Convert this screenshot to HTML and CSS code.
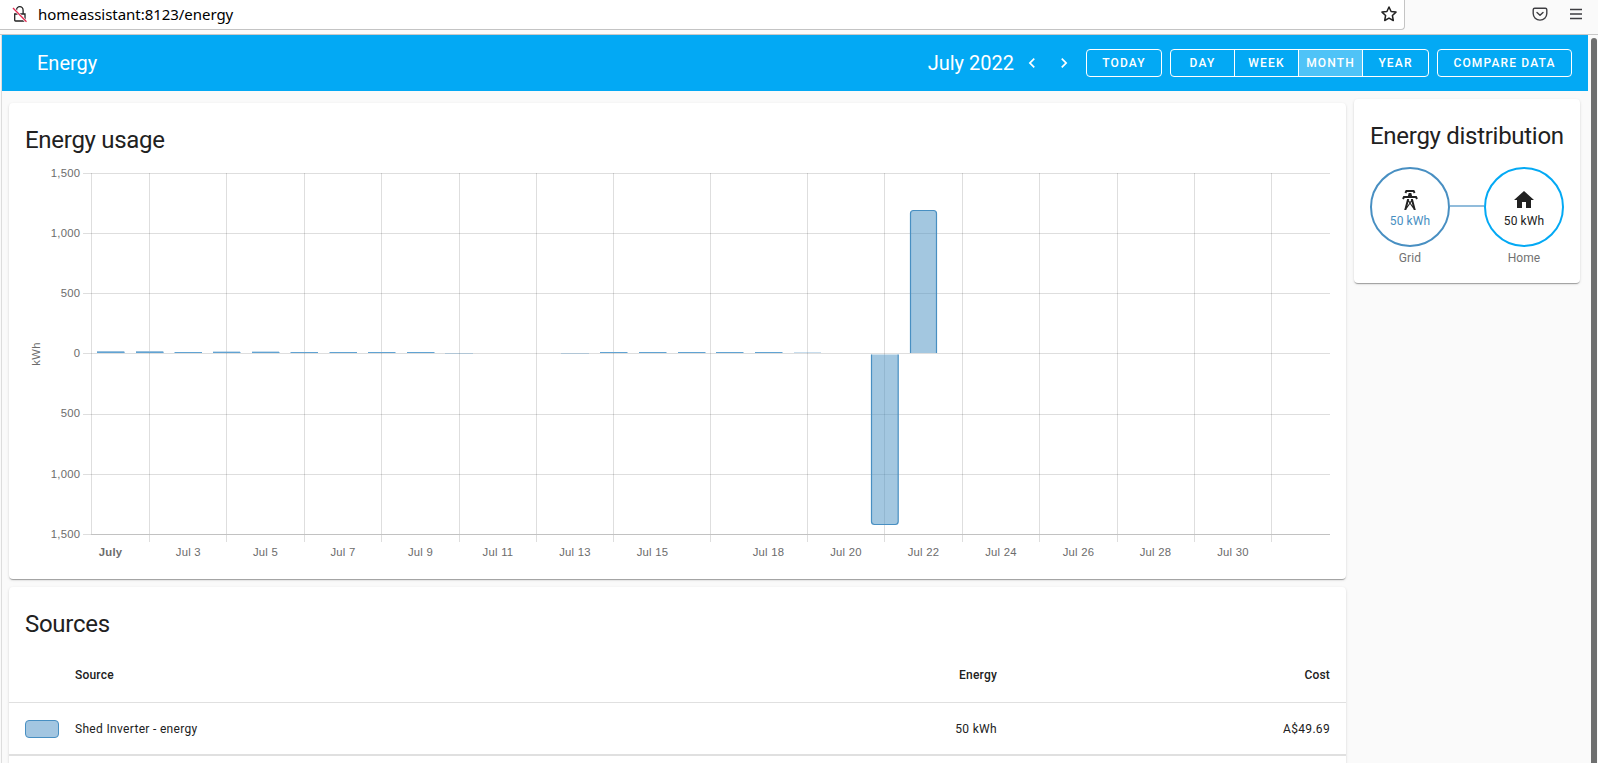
FILE: index.html
```html
<!DOCTYPE html>
<html lang="en">
<head>
<meta charset="utf-8">
<title>Energy</title>
<link rel="stylesheet" href="styles.css">
</head>
<body>
<div class="browser">
  <div class="urlbar">
    <svg class="lock" width="16" height="18" viewBox="0 0 16 18" fill="none"><path d="M2.700 9h10.300v6.200q0 .8-.8.8h-8.700q-.8 0-.8-.8zM4.500 8.500V5.300a3.300 3.600 0 0 1 6.600 0V8.500" stroke="#222" stroke-width="1.300"/><path d="M1 3l13.500 13.800" stroke="#fff" stroke-width="2.600"/><path d="M1 3l13.500 13.800" stroke="#e22850" stroke-width="1.300"/></svg>
    <span class="url">homeassistant:8123/energy</span>
    <svg class="star" width="16" height="16" viewBox="0 0 16 16" fill="none" stroke="#222" stroke-width="1.5" stroke-linejoin="round"><path d="M8 1l2.1 4.5 4.900.6-3.600 3.400.9 5L8 12.100 3.700 14.500l.9-5L1 6.100l4.900-.6z"/></svg>
  </div>
  <div class="tools">
    <svg width="16" height="16" viewBox="0 0 16 16" fill="none" stroke="#3e3e42" stroke-width="1.4" stroke-linecap="round" stroke-linejoin="round"><path d="M2.700 2.200h10.600q1.500 0 1.500 1.500V7.500a6.800 6.600 0 0 1-13.600 0V3.700q0-1.500 1.500-1.500zM5 6.400l3 2.900 3-2.900"/></svg>
    <svg width="12" height="12" viewBox="0 0 12 12" fill="none" stroke="#3e3e42" stroke-width="1.300"><path d="M0 1.500h12M0 6h12M0 10.500h12"/></svg>
  </div>
</div>
<div class="page">
  <div class="app">
    <header class="toolbar">
      <h1>Energy</h1>
      <span class="period">July 2022</span>
      <svg class="chev" width="20" height="20" viewBox="0 0 24 24"><path d="M15.410 16.580L10.830 12l4.580-4.590L14 6l-6 6 6 6z"/></svg>
      <svg class="chev next" width="20" height="20" viewBox="0 0 24 24"><path d="M8.590 16.580L13.170 12 8.590 7.410 10 6l6 6-6 6z"/></svg>
      <button class="btn today">Today</button>
      <div class="group">
        <button>Day</button><button>Week</button><button class="active">Month</button><button>Year</button>
      </div>
      <button class="btn compare">Compare data</button>
    </header>
    <main class="columns">
      <div class="main-col">
        <section class="card usage">
          <h2>Energy usage</h2>
          <svg class="chart" width="1337" height="420" viewBox="9 159 1337 420">
            <g class="grid">
              <path d="M83 173.500H1330M83 233.500H1330M83 293.500H1330M83 353.500H1330M83 414.500H1330M83 474.500H1330M83 534.500H91"/>
              <path d="M91.500 173V534M149.500 173V542M226.500 173V542M304.500 173V542M381.500 173V542M459.500 173V542M536.500 173V542M613.500 173V542M710.500 173V542M807.500 173V542M884.500 173V542M962.500 173V542M1039.500 173V542M1117.500 173V542M1194.500 173V542M1271.500 173V542"/>
              <path class="axis" d="M91 534.500H1330"/>
            </g>
            <g class="low">
              <path class="fill" d="M97 351.200h27.500v1.800h-27.500zM136 351.200h27.500v1.800h-27.500z"/>
              <path class="thin" d="M97 352.500h27.500M136 352.500h27.500M174.500 352.500h27.500M213 352.500h27.500M252 352.500h27.500M290.500 352.500h27.500M329.500 352.500h27.500M368 352.500h27.500M407 352.500h27.500M600 352.500h27.500M639 352.500h27.500M678 352.500h27.500M716 352.500h27.500M755 352.500h27.500"/>
              <path class="faint" d="M97 351.500h27M136 351.500h27M213 351.500h27M252 351.500h27M794 352.500h27M445 353.500h28M561 353.500h28"/>
            </g>
            <g class="bars">
              <path d="M910.500 353V213.500q0-3 3-3h20q3 0 3 3V353"/>
              <path d="M871.500 354.500V521.500q0 3 3 3h20.700q3 0 3-3V354.500"/>
            </g>
            <g class="ylab">
              <text x="80.300" y="177">1,500</text><text x="80.300" y="237">1,000</text><text x="80.300" y="297">500</text><text x="80.300" y="357">0</text><text x="80.300" y="417">500</text><text x="80.300" y="478">1,000</text><text x="80.300" y="538">1,500</text>
            </g>
            <text class="unit" transform="translate(40 354) rotate(-90)">kWh</text>
            <g class="xlab">
              <text class="first" x="110.600" y="556">July</text><text x="188.300" y="556">Jul 3</text><text x="265.500" y="556">Jul 5</text><text x="343" y="556">Jul 7</text><text x="420.500" y="556">Jul 9</text><text x="498" y="556">Jul 11</text><text x="575" y="556">Jul 13</text><text x="652.500" y="556">Jul 15</text><text x="768.500" y="556">Jul 18</text><text x="846" y="556">Jul 20</text><text x="923.500" y="556">Jul 22</text><text x="1001" y="556">Jul 24</text><text x="1078.500" y="556">Jul 26</text><text x="1155.500" y="556">Jul 28</text><text x="1233" y="556">Jul 30</text>
            </g>
          </svg>
        </section>
        <section class="card sources">
          <h2>Sources</h2>
          <div class="row head"><span></span><span>Source</span><span>Energy</span><span>Cost</span></div>
          <div class="row item"><i class="swatch"></i><span>Shed Inverter - energy</span><span>50 kWh</span><span>A$49.69</span></div>
          <div class="row total"></div>
        </section>
      </div>
      <section class="card dist">
        <h2>Energy distribution</h2>
        <div class="flow">
          <div class="node">
            <div class="circle grid-node">
              <svg width="24" height="24" viewBox="0 0 24 24"><path d="M8.280 5.450L6.500 4.550 7.760 2h8.470l1.270 2.550-1.780.89L15 4H9l-.72 1.450M18.620 8h-4.530l-.79-3h-2.600l-.79 3H5.380L4.100 10.550l1.790.89.730-1.440h10.760l.72 1.450 1.790-.89L18.620 8M17.770 22H15.700l-.24-.9L12 15.900l-3.470 5.200-.23.900H6.230l2.890-11h2.070l-.36 1.350L12 14.100l1.160-1.750-.35-1.350h2.070l2.890 11M11.400 15l-.9-1.350-1.180 4.480L11.400 15m3.280 3.120L13.500 13.640 12.600 15l2.080 3.120z"/></svg>
              <span>50 kWh</span>
            </div>
            <label>Grid</label>
          </div>
          <div class="link"></div>
          <div class="node">
            <div class="circle home-node">
              <svg width="24" height="24" viewBox="0 0 24 24"><path d="M10 20v-6h4v6h5v-8h3L12 3 2 12h3v8z"/></svg>
              <span>50 kWh</span>
            </div>
            <label>Home</label>
          </div>
        </div>
      </section>
    </main>
  </div>
  <div class="scrollbar"><div class="thumb"></div></div>
</div>
</body>
</html>
```
FILE: styles.css
```css
* { box-sizing: border-box; }
body {
  margin: 0;
  height: 763px;
  overflow: hidden;
  display: flex;
  flex-direction: column;
  background: #fafafa;
  color: #212121;
  font-family: Roboto, sans-serif;
}
h1, h2 { margin: 0; font-weight: 400; }
svg { display: block; flex: none; }
.browser {
  flex: none;
  display: flex;
  justify-content: space-between;
  height: 35px;
  border-bottom: 1px solid #c8c8c8;
}
.urlbar {
  display: flex;
  align-items: center;
  width: 1405px;
  height: 30px;
  padding: 0 7px 1px 12px;
  background: #fff;
  border: solid #c4c4c4;
  border-width: 0 1px 1px 0;
  border-radius: 0 0 4px 0;
}
.url {
  flex: 1;
  padding-left: 10px;
  font: 15px/20px "Noto Sans", sans-serif;
  letter-spacing: -.04px;
  color: #000;
}
.tools {
  display: flex;
  align-items: center;
  gap: 22px;
  height: 28px;
  padding-right: 16px;
}
.page { display: flex; flex: 1; min-height: 0; padding-left: 1px; }
.app { width: 1587px; border-left: 1px solid #ddd; overflow: hidden; }
.scrollbar { flex: 1; padding: 3px 1px 0 3px; background: #fafafa; }
.thumb { width: 6px; height: 740px; border-radius: 3px; background: #6e6f6f; }
.toolbar {
  display: flex;
  align-items: center;
  height: 56px;
  padding: 0 16px 0 35px;
  background: #03a9f4;
  color: #fff;
  font-size: 20px;
}
.toolbar h1 { flex: 1; font-size: 20px; }
.chev { margin-left: 8px; fill: #fff; }
.chev.next { margin-left: 12px; }
button {
  padding: 0;
  background: none;
  border: 0;
  color: #fff;
  font: 500 12px/27px Roboto, sans-serif;
  letter-spacing: 1.15px;
  text-transform: uppercase;
}
.btn { height: 28px; border: 1px solid #fff; border-radius: 4px; }
.today { width: 76px; margin-left: 12px; }
.compare { width: 135px; }
.group {
  display: flex;
  width: 259px;
  height: 28px;
  margin: 0 8px;
  border: 1px solid #fff;
  border-radius: 4px;
}
.group button { width: 64px; }
.group button + button { border-left: 1px solid #fff; }
.group button:first-child { width: 63px; }
.group button:last-child { width: 66px; }
.group .active { background: #4fc3f7; }
.columns { display: flex; gap: 8px; padding: 8px 7px; align-items: flex-start; }
.main-col { width: 1337px; padding-top: 4px; display: flex; flex-direction: column; gap: 8px; }
.card {
  background: #fff;
  border-radius: 4px;
  box-shadow: 0 2px 1px -1px rgba(0,0,0,.2), 0 1px 1px rgba(0,0,0,.14), 0 1px 3px rgba(0,0,0,.12);
}
.card h2 { font-size: 24px; line-height: 48px; letter-spacing: -.012em; padding-left: 16px; }
.usage { height: 476px; padding-top: 13px; }
.usage h2 { height: 43px; }
.grid path { stroke: rgba(0,0,0,.13); fill: none; }
.grid .axis { stroke: #c2c2c2; }
.low .fill { fill: #a3c6e1; }
.low .thin { stroke: #60a3d3; }
.low .faint { stroke: #488fc2; stroke-opacity: .3; }
.bars path { fill: rgba(72,143,194,.5); stroke: #488fc2; stroke-width: 1.2; }
.chart text { font: 11.3px "Liberation Sans", sans-serif; letter-spacing: .25px; fill: #6c6c6c; }
.ylab text { text-anchor: end; }
.xlab text, .unit { text-anchor: middle; }
.chart .first { font-weight: 700; }
.sources { height: 230px; padding-top: 13px; }
.row {
  display: grid;
  grid-template-columns: 50px 1fr 300px 333px;
  align-items: center;
  padding: 0 16px;
  font-size: 12px;
  letter-spacing: .2px;
  border-bottom: 1px solid #e0e0e0;
}
.row span:nth-child(n+3) { text-align: right; }
.head { height: 55px; font-weight: 500; }
.item { height: 53px; letter-spacing: .32px; border-bottom: 2px solid #e0e0e0; }
.swatch { width: 34px; height: 18px; border: 1px solid #488fc2; border-radius: 4px; background: #a3c6e1; }
.total { border: 0; }
.dist { width: 226px; height: 184px; padding-top: 13px; }
.dist h2 { white-space: nowrap; }
.flow { display: flex; padding: 7px 16px; }
.node { width: 80px; text-align: center; font-size: 12px; line-height: 14px; letter-spacing: .1px; }
.node label { display: block; padding-top: 4px; color: #727272; }
.circle {
  display: flex;
  flex-direction: column;
  align-items: center;
  width: 80px;
  height: 80px;
  padding-top: 19px;
  border: 2px solid #488fc2;
  border-radius: 50%;
}
.circle svg { fill: #212121; }
.grid-node span { color: #488fc2; }
.circle span { margin-top: 2px; }
.home-node { border-color: #03a9f4; }
.link { width: 34px; height: 2px; margin-top: 38px; background: #91bcdb; }
```
